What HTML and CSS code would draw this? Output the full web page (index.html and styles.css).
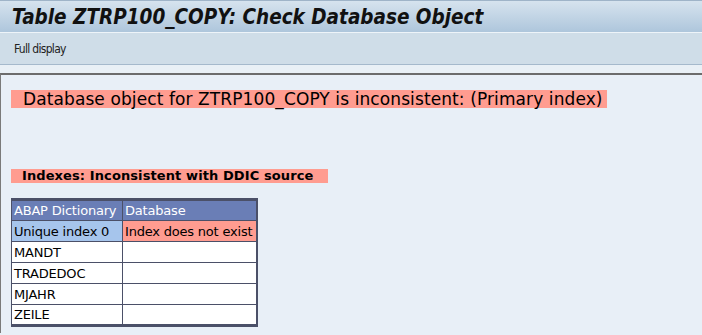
FILE: index.html
```html
<html lang="en">
    <head>
        <title>Check Database Object</title>
        <link rel="stylesheet" href="styles.css">
    </head>
    <body>
        <div class="title-bar">
            <h1 class="title">Table ZTRP100_COPY: Check Database Object</h1>
        </div>
        <div class="toolbar">
            <span class="tool-btn">Full display</span>
        </div>
        <div class="spacer"></div>
        <div class="content">
            <div class="msg msg-main">Database object for ZTRP100_COPY is inconsistent: (Primary index)</div>
            <div class="msg msg-sub">Indexes: Inconsistent with DDIC source</div>
            <table class="idx-table">
                <tr class="head">
                    <td class="col1">ABAP Dictionary</td>
                    <td class="col2">Database</td>
                </tr>
                <tr>
                    <td class="col1 key">Unique index 0</td>
                    <td class="col2 err">Index does not exist</td>
                </tr>
                <tr>
                    <td class="col1">MANDT</td>
                    <td class="col2"></td>
                </tr>
                <tr>
                    <td class="col1">TRADEDOC</td>
                    <td class="col2"></td>
                </tr>
                <tr>
                    <td class="col1">MJAHR</td>
                    <td class="col2"></td>
                </tr>
                <tr>
                    <td class="col1">ZEILE</td>
                    <td class="col2"></td>
                </tr>
            </table>
        </div>
    </body>
</html>
```

FILE: styles.css
```css
body {
    margin: 0;
    padding: 0;
    width: 702px;
    height: 335px;
    overflow: hidden;
    background-color: #e8eff7;
    font-family: "DejaVu Sans", sans-serif;
    color: black;
}

.title-bar {
    height: 31px;
    border-top: 1px solid #9fb4c8;
    border-bottom: 1px solid #eef4f9;
    background: linear-gradient(#d6e3ee, #aec6dc);
    display: flex;
    align-items: center;
    padding-left: 12px;
}

.title {
    margin: 0;
    font-family: "DejaVu Sans Condensed", "DejaVu Sans", sans-serif;
    font-stretch: condensed;
    font-size: 20.5px;
    font-weight: bold;
    font-style: italic;
    color: #111;
}

.toolbar {
    height: 31px;
    background-color: #cfdde8;
    border-bottom: 1px solid #a5b9cc;
    display: flex;
    align-items: center;
    padding-left: 14px;
}

.tool-btn {
    font-family: "DejaVu Sans Condensed", "DejaVu Sans", sans-serif;
    font-stretch: condensed;
    font-size: 12px;
    letter-spacing: -0.7px;
    color: #222;
}

.spacer {
    height: 8px;
    background-color: #e9f0f6;
}

.content {
    border-top: 2px solid #6c6c6c;
    border-left: 1px solid #7a7a7a;
    padding: 15px 0 0 10px;
    height: 260px;
    box-sizing: border-box;
}

.msg {
    background-color: #ff9c90;
    box-sizing: border-box;
    white-space: nowrap;
}

.msg-main {
    width: 596px;
    height: 18px;
    line-height: 18px;
    padding-left: 12px;
    font-size: 17px;
    letter-spacing: 0.1px;
}

.msg-sub {
    margin-top: 61px;
    width: 317px;
    height: 14px;
    line-height: 14px;
    padding-left: 11px;
    font-size: 13px;
    font-weight: bold;
    letter-spacing: 0.1px;
}

.idx-table {
    margin-top: 15px;
    border-collapse: collapse;
    border-top: 3px solid #4b5068;
    border-bottom: 3px solid #4b5068;
    border-left: 1px solid #4b5068;
    border-right: 2px solid #4b5068;
    font-size: 13px;
    letter-spacing: -0.2px;
}

.idx-table td {
    border: 1px solid #4b5068;
    height: 21px;
    padding: 0 0 0 2px;
    white-space: nowrap;
    background-color: white;
}

.col1 {
    width: 108px;
}

.col2 {
    width: 131px;
}

.idx-table .head td {
    background-color: #6a7eb6;
    color: white;
}

.idx-table td.key {
    background-color: #a6c5ec;
}

.idx-table td.err {
    background-color: #ff9c90;
}
```
